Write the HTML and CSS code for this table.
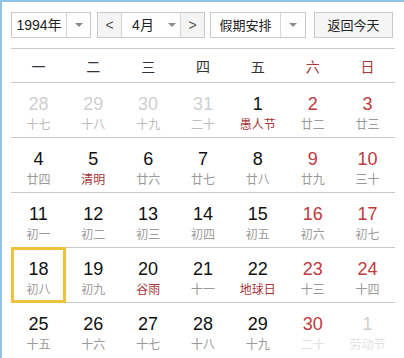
FILE: index.html
```html
<!DOCTYPE html>
<html>
<head>
<meta charset="utf-8">
<link rel="stylesheet" href="styles.css">
</head>
<body>
<div class="cal">
  <div class="toolbar">
    <div class="sel year"><span class="txt">1994年</span><span class="arr"><i class="tri"></i></span></div>
    <div class="sel month">
      <span class="nav">&lt;</span>
      <span class="txt mtxt">4月<i class="tri"></i></span>
      <span class="nav">&gt;</span>
    </div>
    <div class="sel hol"><span class="txt">假期安排</span><span class="arr"><i class="tri"></i></span></div>
    <div class="btn">返回今天</div>
  </div>
  <div class="week">
    <span>一</span><span>二</span><span>三</span><span>四</span><span>五</span><span class="we">六</span><span class="we">日</span>
  </div>
  <div class="row">
    <div class="d other"><b>28</b><s>十七</s></div>
    <div class="d other"><b>29</b><s>十八</s></div>
    <div class="d other"><b>30</b><s>十九</s></div>
    <div class="d other"><b>31</b><s>二十</s></div>
    <div class="d"><b>1</b><s class="fest">愚人节</s></div>
    <div class="d we"><b>2</b><s>廿二</s></div>
    <div class="d we"><b>3</b><s>廿三</s></div>
  </div>
  <div class="row">
    <div class="d"><b>4</b><s>廿四</s></div>
    <div class="d"><b>5</b><s class="fest">清明</s></div>
    <div class="d"><b>6</b><s>廿六</s></div>
    <div class="d"><b>7</b><s>廿七</s></div>
    <div class="d"><b>8</b><s>廿八</s></div>
    <div class="d we"><b>9</b><s>廿九</s></div>
    <div class="d we"><b>10</b><s>三十</s></div>
  </div>
  <div class="row">
    <div class="d"><b>11</b><s>初一</s></div>
    <div class="d"><b>12</b><s>初二</s></div>
    <div class="d"><b>13</b><s>初三</s></div>
    <div class="d"><b>14</b><s>初四</s></div>
    <div class="d"><b>15</b><s>初五</s></div>
    <div class="d we"><b>16</b><s>初六</s></div>
    <div class="d we"><b>17</b><s>初七</s></div>
  </div>
  <div class="row">
    <div class="d today"><b>18</b><s>初八</s></div>
    <div class="d"><b>19</b><s>初九</s></div>
    <div class="d"><b>20</b><s class="fest">谷雨</s></div>
    <div class="d"><b>21</b><s>十一</s></div>
    <div class="d"><b>22</b><s class="fest">地球日</s></div>
    <div class="d we"><b>23</b><s>十三</s></div>
    <div class="d we"><b>24</b><s>十四</s></div>
  </div>
  <div class="row last">
    <div class="d"><b>25</b><s>十五</s></div>
    <div class="d"><b>26</b><s>十六</s></div>
    <div class="d"><b>27</b><s>十七</s></div>
    <div class="d"><b>28</b><s>十八</s></div>
    <div class="d"><b>29</b><s>十九</s></div>
    <div class="d we"><b>30</b><s class="faint">二十</s></div>
    <div class="d other"><b>1</b><s class="faint">劳动节</s></div>
  </div>
</div>
</body>
</html>
```
FILE: styles.css
```css
* { box-sizing: border-box; }
html, body { margin: 0; padding: 0; background: #fff; }
body {
  width: 404px;
  height: 358px;
  overflow: hidden;
  border-top: 2px solid #8fc3e6;
  border-left: 2px solid #8fc3e6;
  font-family: "Liberation Sans", "Noto Sans CJK SC", sans-serif;
}
.cal { padding: 10px 0 0 9px; width: 393px; }
.toolbar {
  display: flex;
  align-items: center;
  height: 26px;
}
.sel, .btn {
  display: flex;
  height: 26px;
  border: 1px solid #c9c9c9;
  background: #fff;
  font-size: 13px;
  color: #222;
  font-family: "Noto Sans CJK SC", sans-serif;
  line-height: 24px;
}
.sel .txt { display: flex; align-items: center; justify-content: center; }
.sel .arr {
  display: flex; align-items: center; justify-content: center;
  border-left: 1px solid #d6d6d6;
}
.tri {
  display: block;
  width: 0; height: 0;
  border-left: 4px solid transparent;
  border-right: 4px solid transparent;
  border-top: 4px solid #8a8a8a;
}
.year { width: 80px; }
.year .txt { width: 54px; font-size: 14px; font-family: "Liberation Sans", "Noto Sans CJK SC", sans-serif; }
.year .arr { width: 24px; }
.month { width: 108px; margin-left: 6px; background: #f4f4f4; }
.month .nav {
  width: 23px; display: flex; align-items: center; justify-content: center;
  color: #555; font-size: 14px; font-family: "Liberation Sans", sans-serif;
}
.month .mtxt {
  width: 60px; background: #fff;
  border-left: 1px solid #d6d6d6; border-right: 1px solid #d6d6d6;
  gap: 14px; padding-left: 6px;
  font-size: 14px;
  font-family: "Liberation Sans", "Noto Sans CJK SC", sans-serif;
}
.hol { width: 96px; margin-left: 5px; }
.hol .txt { width: 69px; }
.hol .arr { width: 25px; }
.btn {
  width: 79px; margin-left: 8px;
  background: #f5f5f5;
  justify-content: center;
}
.week {
  display: grid;
  grid-template-columns: repeat(7, 1fr);
  margin-top: 10px;
  border-top: 1px solid #c8ccd0;
  border-bottom: 1px solid #c8c8c8;
  height: 35px;
  align-items: center;
  font-family: "Noto Sans CJK SC", sans-serif;
  font-size: 14px;
  color: #333;
  width: 384px;
}
.week span { text-align: center; }
.week .we { color: #a9363a; }
.row {
  display: grid;
  grid-template-columns: repeat(7, 1fr);
  height: 55px;
  border-bottom: 1px solid #c8c8c8;
  width: 384px;
}
.row.last { border-bottom: none; }
.d {
  position: relative;
  display: flex;
  flex-direction: column;
  align-items: center;
  padding-top: 12px;
}
.d b {
  font-weight: normal;
  font-size: 18px;
  line-height: 18px;
  color: #111;
  font-family: "Liberation Sans", sans-serif;
}
.d s {
  text-decoration: none;
  font-size: 12px;
  line-height: 14px;
  margin-top: 4px;
  color: #9a9a9a;
  font-family: "Noto Sans CJK SC", sans-serif;
}
.d.we b { color: #c0393d; }
.d s.fest { color: #a8353a; }
.d.other b, .d.other s { color: #bdbdbd; }
.d s.faint { color: #e2e2e2; }
.d.other b { color: #cfcfcf; }
.today::after {
  content: "";
  position: absolute;
  left: 0; right: 0; top: -1px; bottom: -1px;
  border: 3px solid #eec23d;
}
```
